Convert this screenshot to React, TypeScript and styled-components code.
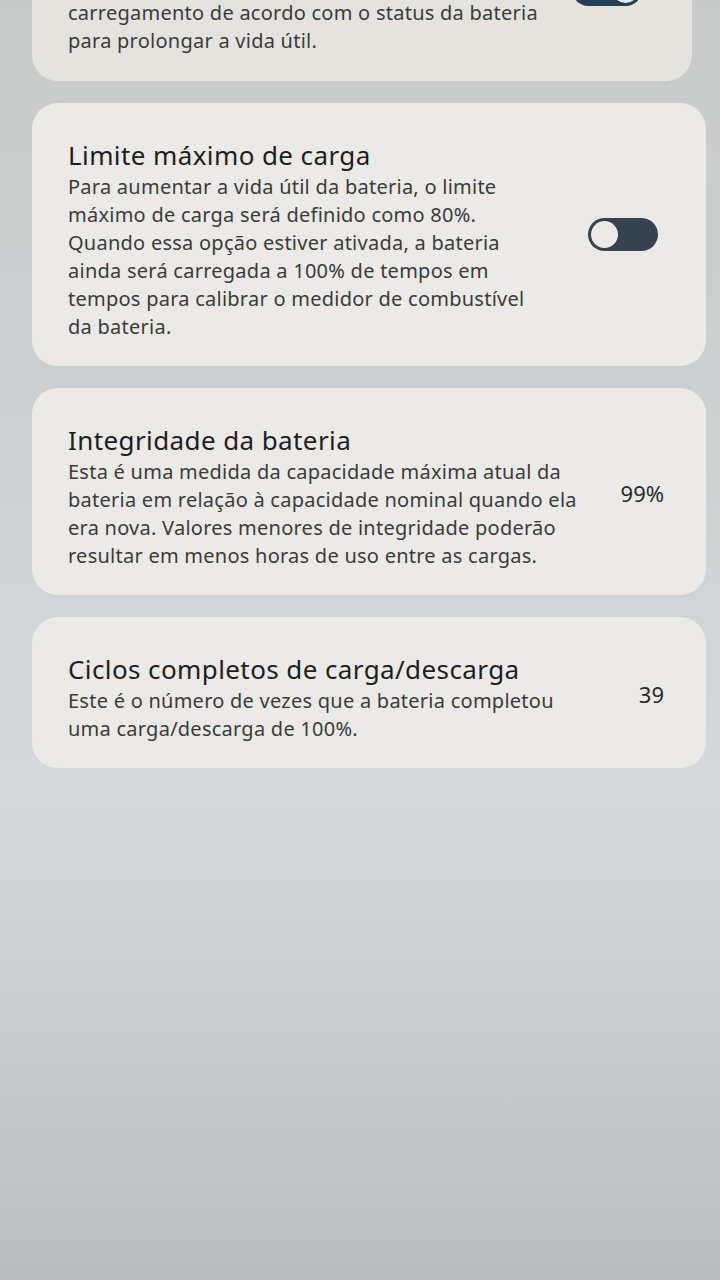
import * as React from "react";
import styled, { createGlobalStyle } from "styled-components";

const GlobalStyle = createGlobalStyle`
  html, body {
    margin: 0;
    padding: 0;
  }
  body {
    font-family: "Noto Sans", "Open Sans", sans-serif;
    background: #c8cbcc;
  }
`;

type Setting = {
  title: string;
  lines: string[];
  value?: string;
  toggle?: "on" | "off";
};

const settings: Setting[] = [
  {
    title: "Limite máximo de carga",
    lines: [
      "Para aumentar a vida útil da bateria, o limite",
      "máximo de carga será definido como 80%.",
      "Quando essa opção estiver ativada, a bateria",
      "ainda será carregada a 100% de tempos em",
      "tempos para calibrar o medidor de combustível",
      "da bateria."
    ],
    toggle: "off"
  },
  {
    title: "Integridade da bateria",
    lines: [
      "Esta é uma medida da capacidade máxima atual da",
      "bateria em relação à capacidade nominal quando ela",
      "era nova. Valores menores de integridade poderão",
      "resultar em menos horas de uso entre as cargas."
    ],
    value: "99%"
  },
  {
    title: "Ciclos completos de carga/descarga",
    lines: [
      "Este é o número de vezes que a bateria completou",
      "uma carga/descarga de 100%."
    ],
    value: "39"
  }
];

export default function App() {
  return (
    <React.Fragment>
      <GlobalStyle />
      <Screen>
        <TopCard>
          <Body>
            <Description>
              <Line>Quando ativado, ajusta o modo de</Line>
              <Line>carregamento de acordo com o status da bateria</Line>
              <Line>para prolongar a vida útil.</Line>
            </Description>
          </Body>
          <TopToggle>
            <Switch $on />
          </TopToggle>
        </TopCard>

        {settings.map((s) => (
          <Card key={s.title}>
            <Body>
              <Title>{s.title}</Title>
              <Description>
                {s.lines.map((l) => (
                  <Line key={l}>{l}</Line>
                ))}
              </Description>
            </Body>
            {s.toggle && <Switch $on={s.toggle === "on"} />}
            {s.value && <Value>{s.value}</Value>}
          </Card>
        ))}
      </Screen>
    </React.Fragment>
  );
}

const Screen = styled.div`
  width: 720px;
  height: 1280px;
  overflow: hidden;
  box-sizing: border-box;
  padding: 0 14px 0 32px;
  display: flex;
  flex-direction: column;
  gap: 22px;
  background: linear-gradient(
    180deg,
    #c9cbca 0%,
    #cdd0d1 30%,
    #d6d9db 62%,
    #c6cacb 85%,
    #b9bdbe 100%
  );
`;

const Card = styled.section`
  display: flex;
  align-items: center;
  gap: 24px;
  padding: 36px 42px 25px 36px;
  border-radius: 26px;
  background: #ebeae6;
  color: #2b2b2b;
`;

const TopCard = styled(Card)`
  position: relative;
  margin-top: -60px;
  margin-right: 14px;
  padding: 31px 40px 26px 36px;
  background: #e4e3de;
`;

const TopToggle = styled.div`
  position: absolute;
  top: 45px;
  right: 44px;
`;

const Body = styled.div`
  flex: 1;
  min-width: 0;
`;

const Title = styled.h2`
  margin: 0 0 2px;
  font-size: 26px;
  font-weight: 400;
  letter-spacing: 0.4px;
  line-height: 32px;
  color: #1e1e1e;
  white-space: nowrap;
`;

const Description = styled.div`
  font-size: 20px;
  letter-spacing: 0.25px;
  line-height: 28px;
  color: #3b3b3b;
`;

const Line = styled.div`
  white-space: nowrap;
`;

const Value = styled.div`
  font-size: 22px;
  color: #2a2a2a;
  margin-top: -8px;
`;

const Switch = styled.div<{ $on?: boolean }>`
  position: relative;
  flex: none;
  width: 70px;
  height: 33px;
  margin-top: -12px;
  margin-right: 6px;
  border-radius: 17px;
  background: ${(p) => (p.$on ? "#1f3f5c" : "#36424d")};

  &::after {
    content: "";
    position: absolute;
    top: 3px;
    ${(p) => (p.$on ? "right: 3px;" : "left: 3px;")}
    width: 27px;
    height: 27px;
    border-radius: 50%;
    background: #ecebe7;
  }
`;
